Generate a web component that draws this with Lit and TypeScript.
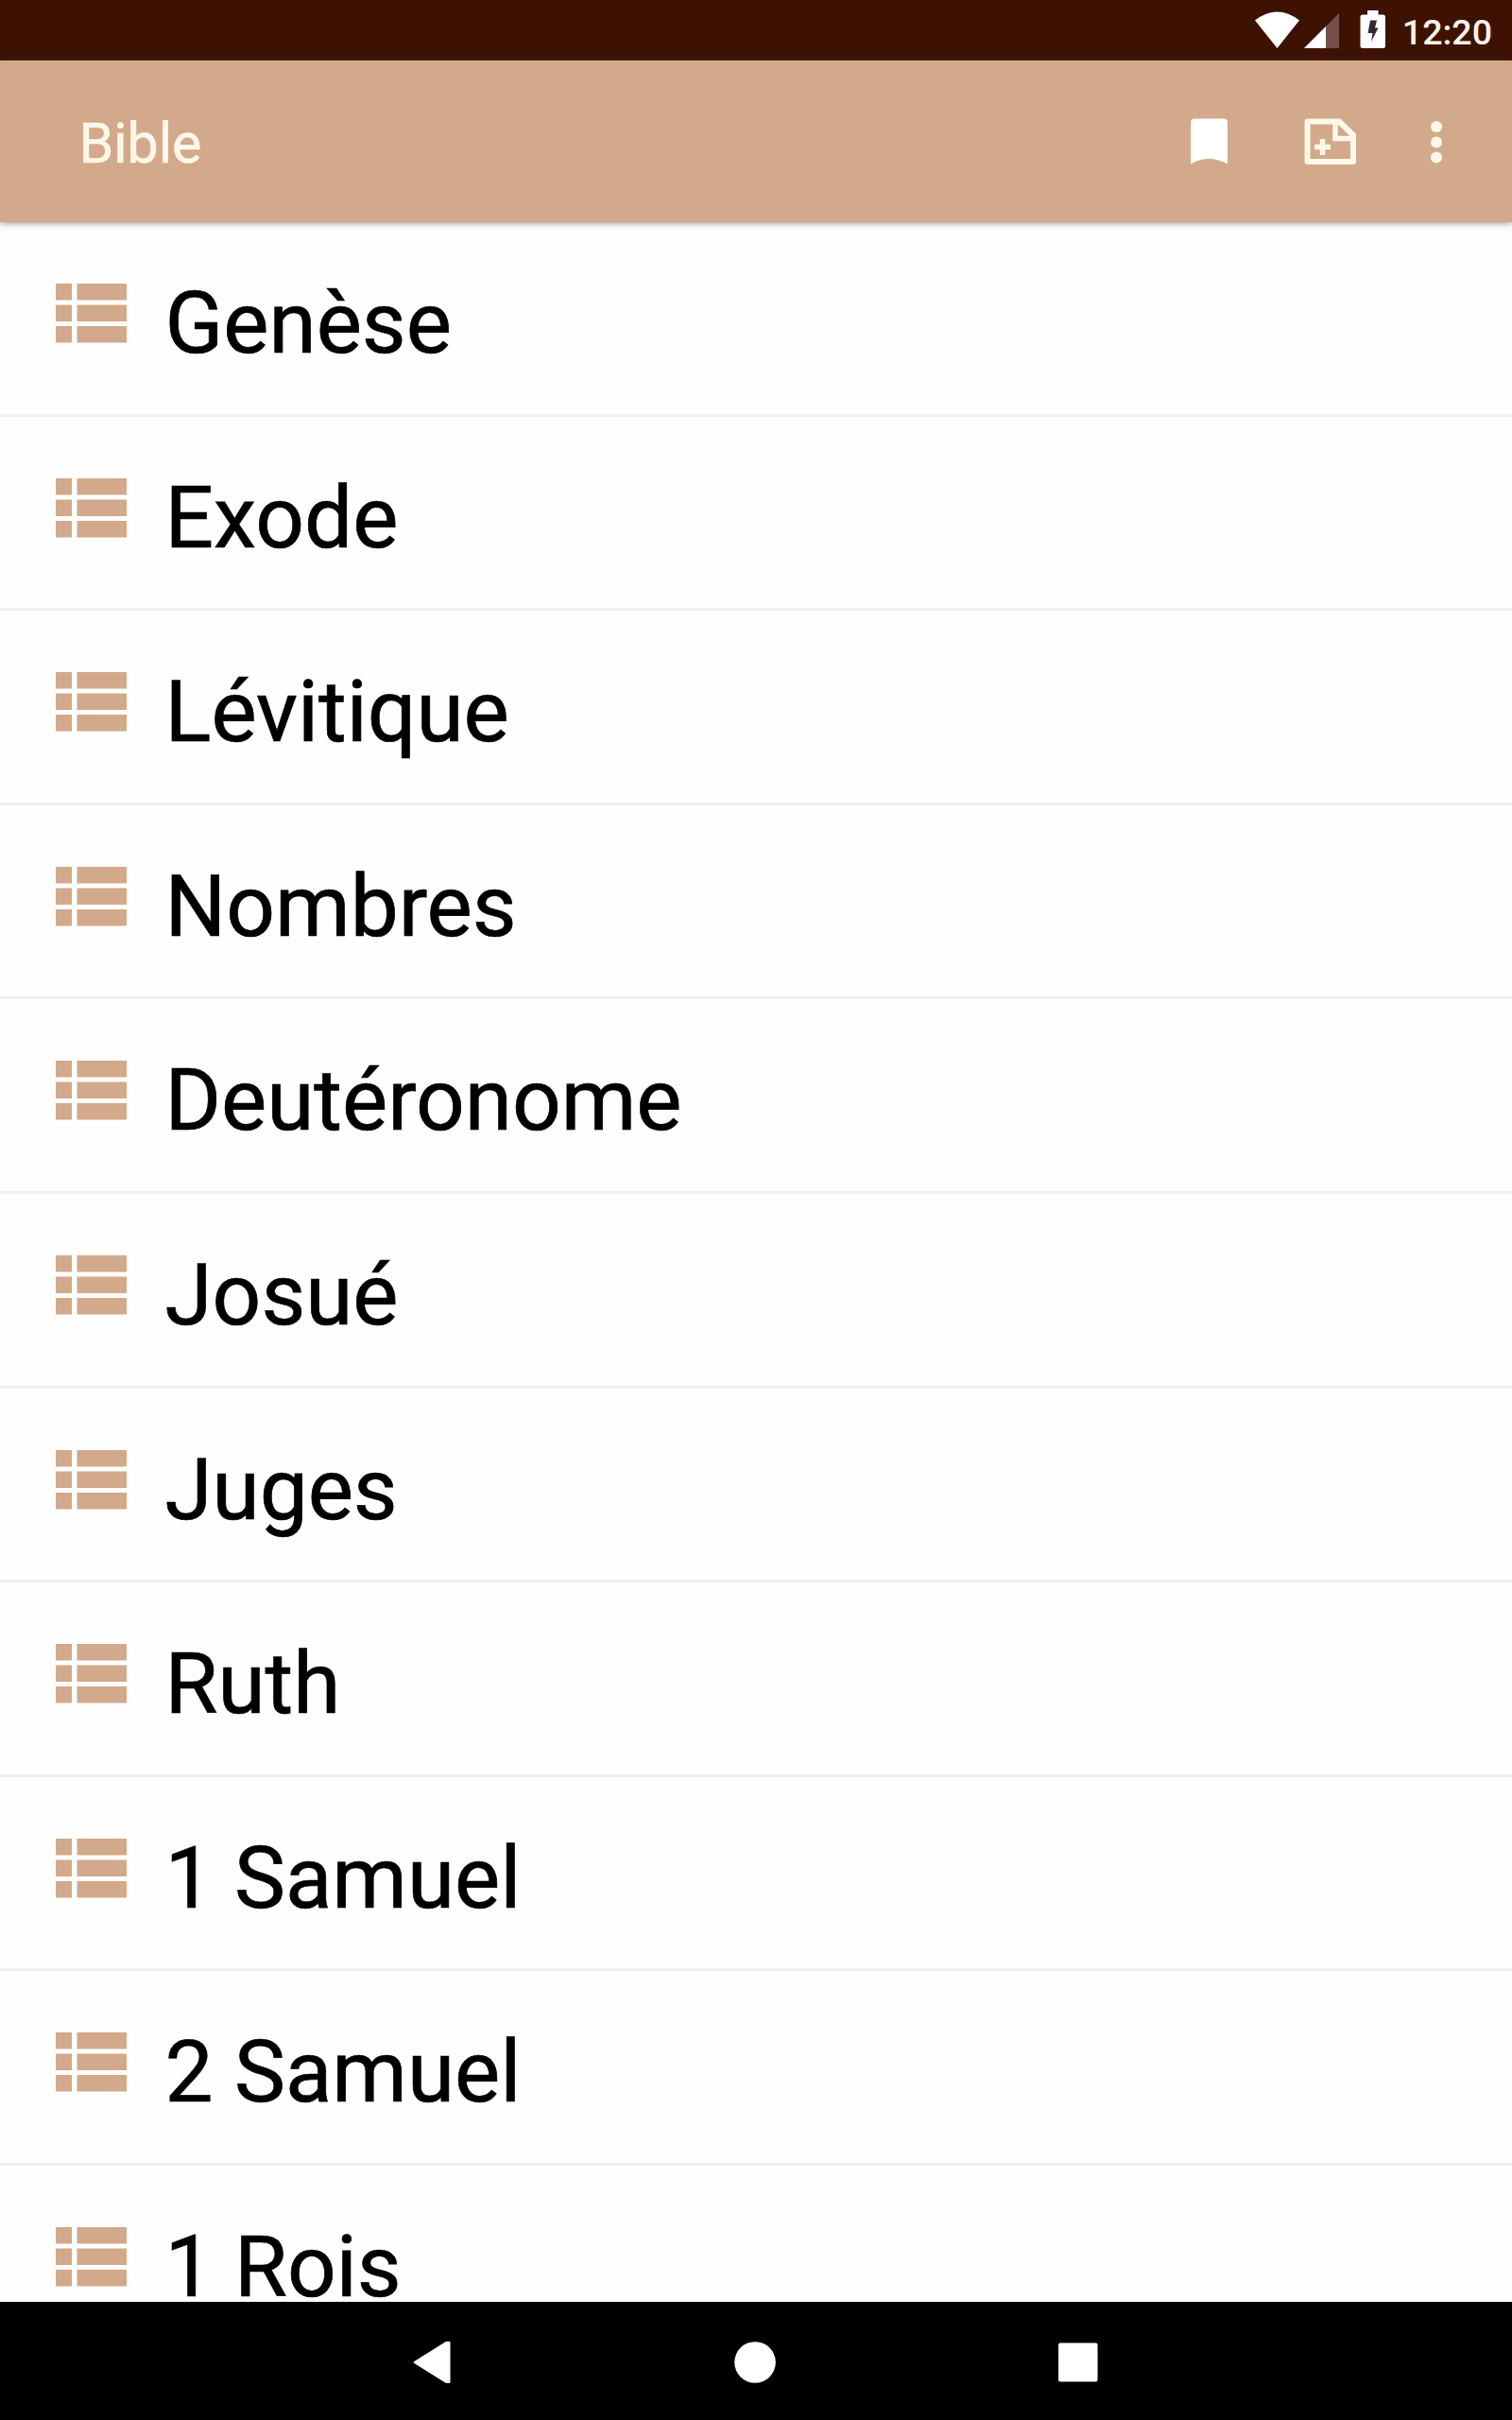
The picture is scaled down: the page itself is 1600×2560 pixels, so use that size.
import { LitElement, html, css, svg } from "lit";
import { customElement, property } from "lit/decorators.js";

const BOOKS = [
  "Genèse", "Exode", "Lévitique", "Nombres", "Deutéronome", "Josué",
  "Juges", "Ruth", "1 Samuel", "2 Samuel", "1 Rois",
];

@customElement("status-bar")
class StatusBar extends LitElement {
  static styles = css`
    :host {
      display: flex;
      justify-content: flex-end;
      align-items: center;
      height: 64px;
      padding-right: 21px;
      box-sizing: border-box;
      background: #3d1202;
      color: #fff3ea;
    }
    .icons { display: block; width: 150px; height: 64px; margin-right: 7.5px; }
    .time { font-size: 37.5px; font-weight: 500; line-height: 64px; padding-top: 4px; }
  `;
  render() {
    return html`
      <svg class="icons" viewBox="1326 0 150 64">
        <path fill="#fff" d="M1328 21.5Q1351.500 3.500 1375 21.500L1351.500 51Z" />
        <path fill="#75504a" d="M1380 51L1417 14V51Z" />
        <path fill="#fff" d="M1380 51L1403 28V51Z" />
        <path fill="#fff" d="M1447 11H1458.500V15.500H1463.500Q1466 15.500 1466 18V48.500Q1466 51 1463.500 51H1442Q1439.500 51 1439.500 48.500V18Q1439.500 15.500 1442 15.500H1447Z" />
        <path fill="#35272b" d="M1450 21.500H1457L1455 29.500H1458.500L1451 44L1452.500 35H1447.500Z" />
      </svg>
      <span class="time">12:20</span>
    `;
  }
}

@customElement("app-bar")
class AppBar extends LitElement {
  static styles = css`
    :host {
      display: flex;
      align-items: center;
      justify-content: space-between;
      height: 171px;
      padding: 0 70px 0 83.5px;
      box-sizing: border-box;
      background: #d2a98a;
      box-shadow: 0 1px 7px rgba(60, 75, 85, 0.6);
      position: relative;
    }
    .title {
      margin: 0;
      padding-top: 5px;
      font-size: 59px;
      font-weight: 400;
      line-height: 80px;
      color: #fff6ea;
      -webkit-text-stroke: 0.6px #fff6ea;
    }
    .actions { display: block; width: 280px; height: 54px; }
  `;
  render() {
    return html`
      <h1 class="title">Bible</h1>
      <svg class="actions" viewBox="1250 122.500 280 54">
        <path fill="#fff" d="M1264 125H1295Q1299 125 1299 129V173Q1289 167.500 1279.500 167.500Q1270 167.500 1260 173V129Q1260 125 1264 125Z" />
        <path fill="none" stroke="#fff8e8" stroke-width="6" stroke-linejoin="round" d="M1383.500 128H1417L1432 142.500V170.500H1383.500Z" />
        <path fill="none" stroke="#fff8e8" stroke-width="5.500" d="M1413 127V146H1432" />
        <path fill="none" stroke="#fff8e8" stroke-width="5.500" d="M1399.500 146.500V163.500M1391 155H1408" />
        ${[133.5, 150, 166].map((y) => svg`<circle cx="1520" cy=${y} r="6" fill="#fff8ea" />`)}
      </svg>
    `;
  }
}

@customElement("book-row")
class BookRow extends LitElement {
  @property() name = "";
  static styles = css`
    :host {
      display: flex;
      align-items: flex-start;
      height: 205.62px;
      flex: none;
      box-sizing: border-box;
      padding-left: 58.5px;
      border-bottom: 3px solid #efefef;
    }
    .icon { display: block; width: 75.5px; height: 63px; margin: 65px 40.5px 0 0; flex: none; }
    .label {
      font-size: 90.8px;
      line-height: 108px;
      padding-top: 53px;
      white-space: nowrap;
      color: #000;
      -webkit-text-stroke: 0.7px #000;
    }
  `;
  render() {
    return html`
      <svg class="icon" viewBox="0 0 75.500 63">
        ${[0, 22.5, 45].map((y) => svg`
          <rect x="0" y=${y} width="17" height="17.500" fill="#d2a98a" />
          <rect x="22.500" y=${y} width="53" height="17.500" fill="#d2a98a" />`)}
      </svg>
      <span class="label">${this.name}</span>
    `;
  }
}

@customElement("nav-bar")
class NavBar extends LitElement {
  static styles = css`
    :host {
      display: flex;
      justify-content: center;
      align-items: center;
      height: 125.5px;
      box-sizing: border-box;
      padding-top: 3px;
      background: #000;
    }
    .keys { display: block; width: 730px; height: 60px; }
  `;
  render() {
    return html`
      <svg class="keys" viewBox="435 2469 730 60">
        <path fill="#fff" stroke="#fff" stroke-width="2" stroke-linejoin="round" d="M438.500 2499L472 2478H475.500V2520H472Z" />
        <circle cx="799" cy="2499" r="21.800" fill="#fff" />
        <rect x="1120" y="2478.500" width="41.500" height="41" rx="2" fill="#fff" />
      </svg>
    `;
  }
}

@customElement("app-root")
class AppRoot extends LitElement {
  static styles = css`
    :host {
      display: flex;
      flex-direction: column;
      width: 1600px;
      height: 2560px;
      overflow: hidden;
      background: #fefefe;
      font-family: Roboto, "Liberation Sans", sans-serif;
    }
    status-bar, app-bar, nav-bar { flex: none; }
    .list { display: flex; flex-direction: column; flex: 1; min-height: 0; overflow: hidden; }
  `;
  render() {
    return html`
      <status-bar></status-bar>
      <app-bar></app-bar>
      <main class="list">${BOOKS.map((b) => html`<book-row .name=${b}></book-row>`)}</main>
      <nav-bar></nav-bar>
    `;
  }
}
